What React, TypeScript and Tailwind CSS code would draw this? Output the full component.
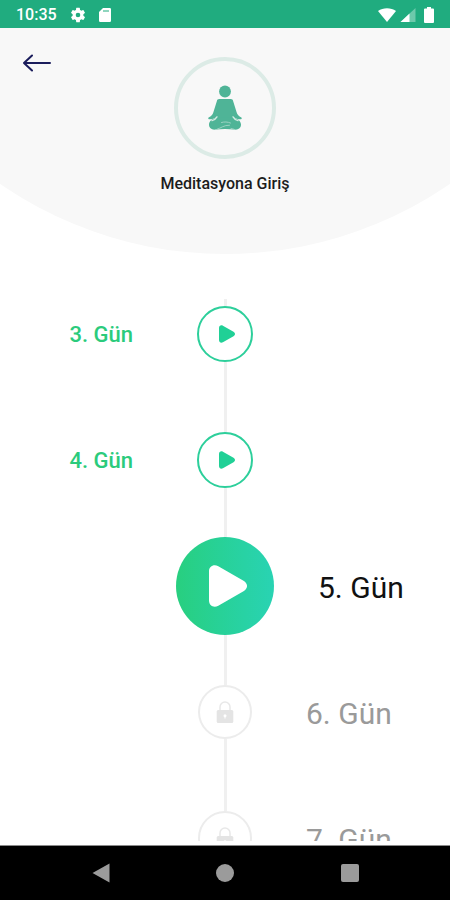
import { clsx } from "clsx";

type DayStatus = "done" | "current" | "locked";

interface Day {
  label: string;
  status: DayStatus;
}

const days: Day[] = [
  { label: "3. Gün", status: "done" },
  { label: "4. Gün", status: "done" },
  { label: "5. Gün", status: "current" },
  { label: "6. Gün", status: "locked" },
  { label: "7. Gün", status: "locked" },
];

function StatusBar() {
  return (
    <div className="flex h-7 shrink-0 items-center justify-between bg-[#20ac7f] pt-0.5 pr-3 pl-4 text-white">
      <div className="flex items-center gap-3">
        <span className="text-base font-medium">10:35</span>
        <svg viewBox="0 0 24 24" className="size-4.5" fill="currentColor" aria-hidden="true">
          <path d="M19.14 12.94c.04-.3.06-.61.06-.94s-.02-.64-.07-.94l2.03-1.58a.49.49 0 0 0 .12-.61l-1.92-3.32a.49.49 0 0 0-.59-.22l-2.39.96a7 7 0 0 0-1.62-.94l-.36-2.54a.48.48 0 0 0-.48-.41h-3.84a.48.48 0 0 0-.47.41l-.36 2.54c-.59.24-1.13.57-1.62.94l-2.39-.96a.48.48 0 0 0-.59.22L2.74 8.87a.48.48 0 0 0 .12.61l2.03 1.58a6.6 6.6 0 0 0 0 1.88l-2.03 1.58a.49.49 0 0 0-.12.61l1.92 3.32c.12.22.37.29.59.22l2.39-.96c.5.38 1.03.7 1.62.94l.36 2.54c.05.24.24.41.48.41h3.84c.24 0 .44-.17.47-.41l.36-2.54a7 7 0 0 0 1.62-.94l2.39.96c.22.08.47 0 .59-.22l1.92-3.32a.48.48 0 0 0-.12-.61zM12 15.1a3.1 3.1 0 1 1 0-6.2 3.1 3.1 0 0 1 0 6.2" />
        </svg>
        <svg viewBox="0 0 12 14" className="h-3.5 w-3" fill="currentColor" aria-hidden="true">
          <path
            fillRule="evenodd"
            d="M4 0h6.800a1.200 1.200 0 0 1 1.200 1.200v11.600a1.200 1.200 0 0 1-1.200 1.200H1.200A1.200 1.200 0 0 1 0 12.800V4zM4.500 2v2h1V2zm2 0v2h1V2zm2 0v2h1V2z"
          />
        </svg>
      </div>
      <div className="flex items-center gap-1">
        <svg viewBox="0 0 18 14" className="h-3.5 w-4.5" fill="currentColor" aria-hidden="true">
          <path d="M9 14L0 3C5 -.7 13 -.7 18 3z" />
        </svg>
        <svg viewBox="0 0 15 14" className="h-3.5 w-4" fill="currentColor" aria-hidden="true">
          <path d="M15 0v14H0z" fillOpacity=".35" />
          <path d="M9 5.600V14H0z" />
        </svg>
        <svg viewBox="0 0 10 16" className="mx-1 h-4 w-2.5" fill="currentColor" aria-hidden="true">
          <path d="M3 0h4v1.500h2a1 1 0 0 1 1 1V15a1 1 0 0 1-1 1H1a1 1 0 0 1-1-1V2.500a1 1 0 0 1 1-1h2z" />
        </svg>
      </div>
    </div>
  );
}

function MeditationIcon() {
  return (
    <svg viewBox="0 0 34 46" className="h-[46px] w-[34px]" fill="#4fb497" aria-hidden="true">
      <circle cx="17" cy="6.500" r="5.900" />
      {/* torso and arms */}
      <path d="M11.200 14h11.600c1.300 0 2 .7 2.300 1.900l3.600 11.500c.6 2 2 3.500 4.700 5.200.6.500.4 1.500-.4 1.600-2.500.3-4.700-.3-6.500-1.700L25.500 37h-17l-1-4.500C5.700 33.900 3.500 34.500 1 34.200c-.8-.1-1-1.100-.4-1.600 2.700-1.700 4.100-3.200 4.700-5.200l3.600-11.500c.3-1.200 1-1.900 2.300-1.900z" />
      {/* crossed legs */}
      <path d="M9 32.500h16c3.800 1 8 3 8 7.100 0 3.700-3 5.500-6.500 5L17 44.100l-9.500.5C4 45.100 1 43.300 1 39.600c0-4.100 4.200-6.100 8-7.100z" />
      <path
        d="M4 35.700c2.300-.7 3.800-1.900 5-3.900M30 35.700c-2.300-.7-3.800-1.900-5-3.900"
        fill="none"
        stroke="#d5ebe4"
        strokeWidth="1.300"
        strokeLinecap="round"
      />
      <path
        d="M9.500 44c3.500-.8 6.200-4 12-3.800M13.500 37.500c2.800-.8 6-.8 9 .5M23 43.500l2.800.7"
        fill="none"
        stroke="#a3d5c6"
        strokeWidth=".9"
        strokeLinecap="round"
      />
    </svg>
  );
}

function PlayIcon({ className }: { className: string }) {
  return (
    <svg viewBox="0 0 38 42" className={className} fill="currentColor" aria-hidden="true">
      <path d="M0 6.500C0 1.300 4.600-1.200 9.300 1.200L34.500 15.800c4.700 2.700 4.700 7.700 0 10.400L9.300 40.800C4.600 43.200 0 40.700 0 35.500z" />
    </svg>
  );
}

function LockIcon() {
  return (
    <svg viewBox="0 0 18 24" className="h-6 w-[18px]" aria-hidden="true">
      <path d="M4 10.500V7a5 5 0 0 1 10 0v3.500" fill="none" stroke="#e8e8e8" strokeWidth="1.500" />
      <rect x=".7" y="10" width="16.600" height="13" rx="1.500" fill="#e4e4e4" />
      <circle cx="9" cy="15.800" r="1.500" fill="#fff" />
      <path d="M8.500 16h1v2.500h-1z" fill="#fff" />
    </svg>
  );
}

function DayButton({ day }: { day: Day }) {
  return (
    <button
      type="button"
      aria-label={day.label}
      disabled={day.status === "locked"}
      className={clsx(
        "flex shrink-0 items-center justify-center rounded-full",
        day.status === "done" && "size-14 border-2 border-[#2dcf9b] bg-white text-[#20d096]",
        day.status === "current" && "size-[98px] bg-linear-to-r from-[#28cf7f] to-[#29d3b3] pl-1.5 text-white",
        day.status === "locked" && "size-[54px] border-2 border-[#ececec] bg-white"
      )}
    >
      {day.status === "done" && <PlayIcon className="ml-1 h-[18px] w-4" />}
      {day.status === "current" && <PlayIcon className="h-[42px] w-[38px]" />}
      {day.status === "locked" && <LockIcon />}
    </button>
  );
}

function DayRow({ day, first }: { day: Day; first: boolean }) {
  return (
    <li className="grid h-[126px] grid-cols-[1fr_auto_1fr] items-center">
      <div className="pt-px pr-16 text-right text-[22px] font-medium text-[#2bcb7c]">
        {day.status === "done" && day.label}
      </div>
      <div className="flex h-full flex-col items-center">
        <span className={clsx("w-[3px] bg-[#f0f0f0]", first ? "mt-7 h-[7px]" : "flex-1")} />
        <DayButton day={day} />
        <span className="w-[3px] flex-1 bg-[#f0f0f0]" />
      </div>
      <div
        className={clsx(
          "pt-1 text-3xl",
          day.status === "current" ? "pl-11 text-[#111111]" : "pl-[54px] text-[#9a9a9a]"
        )}
      >
        {day.status !== "done" && day.label}
      </div>
    </li>
  );
}

function NavigationBar() {
  return (
    <nav className="grid h-[55px] shrink-0 grid-cols-[1fr_48px_1fr] items-center border-t border-[#8a8a8a] bg-black text-[#9b9b9b]">
      <button type="button" aria-label="Geri" className="flex justify-center">
        <svg viewBox="0 0 18 20" className="h-5 w-[18px]" fill="currentColor">
          <path d="M17.500.5v19L.5 10z" />
        </svg>
      </button>
      <button type="button" aria-label="Ana ekran" className="flex justify-center">
        <span className="size-[18px] rounded-full bg-current" />
      </button>
      <button type="button" aria-label="Son uygulamalar" className="flex justify-center">
        <span className="size-[18px] rounded-xs bg-current" />
      </button>
    </nav>
  );
}

export default function App() {
  return (
    <div className="flex h-screen flex-col bg-white font-[Roboto,sans-serif]">
      <StatusBar />

      <header className="relative isolate h-[226px] shrink-0 overflow-hidden">
        <div className="absolute bottom-0 left-1/2 -z-10 aspect-square w-[176%] -translate-x-1/2 rounded-full bg-[#f8f8f8]" />
        <div className="grid grid-cols-[1fr_auto_1fr] items-start pt-[29px]">
          <a href="#" aria-label="Geri" className="-mt-[3px] ml-[23px] w-7">
            <svg
              viewBox="0 0 28 18"
              className="h-[18px] w-7"
              fill="none"
              stroke="#1b1d5c"
              strokeWidth="2"
              strokeLinecap="round"
              strokeLinejoin="round"
            >
              <path d="M27 9H1M9 1.500L1 9l8 7.500" />
            </svg>
          </a>
          <div className="flex flex-col items-center">
            <div className="flex size-[102px] items-center justify-center rounded-full border-4 border-[#dcebe6]">
              <MeditationIcon />
            </div>
            <h1 className="mt-[13px] text-base font-medium text-[#1c1c1c]">Meditasyona Giriş</h1>
          </div>
        </div>
      </header>

      <main className="mb-1 min-h-0 flex-1 overflow-y-auto pt-[17px] [scrollbar-width:none]">
        <ul>
          {days.map((day, index) => (
            <DayRow key={day.label} day={day} first={index === 0} />
          ))}
        </ul>
      </main>

      <NavigationBar />
    </div>
  );
}
